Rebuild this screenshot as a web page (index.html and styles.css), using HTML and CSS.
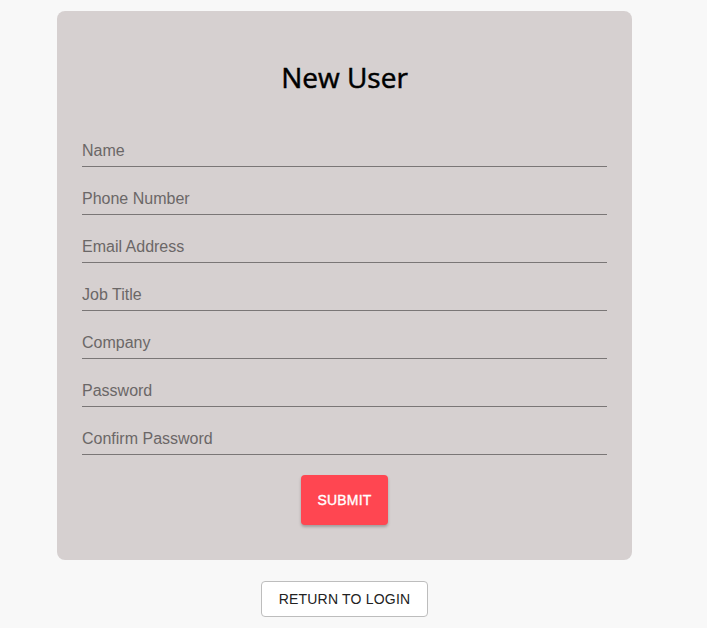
FILE: index.html
```html
<!DOCTYPE html>
<html>
<head>
<meta charset="utf-8">
<link rel="stylesheet" href="styles.css">
</head>
<body>
<div class="page">
  <div class="card">
    <h2 class="title">New User</h2>
    <form class="form">
      <input class="field" type="text" placeholder="Name">
      <input class="field" type="text" placeholder="Phone Number">
      <input class="field" type="text" placeholder="Email Address">
      <input class="field" type="text" placeholder="Job Title">
      <input class="field" type="text" placeholder="Company">
      <input class="field" type="password" placeholder="Password">
      <input class="field" type="password" placeholder="Confirm Password">
      <button class="submit" type="button">SUBMIT</button>
    </form>
  </div>
  <div class="actions">
    <button class="return" type="button">RETURN TO LOGIN</button>
  </div>
</div>
</body>
</html>
```

FILE: styles.css
```css
html, body {
  margin: 0;
  padding: 0;
  background: #f8f8f8;
}
.page {
  width: 575px;
  margin-left: 57px;
  padding-top: 11px;
}
.card {
  background: #d6d0d0;
  border-radius: 8px;
  padding: 49px 25px 35px;
}
.title {
  margin: 0 0 40px;
  text-align: center;
  font-family: "Open Sans", sans-serif;
  font-weight: 400;
  font-size: 28px;
  line-height: 34px;
  -webkit-text-stroke: 0.5px #000;
  color: #000;
}
.form {
  display: flex;
  flex-direction: column;
  gap: 15px;
  margin: 0;
}
.field {
  box-sizing: border-box;
  height: 33px;
  width: 100%;
  border: none;
  border-bottom: 1px solid #7a7676;
  background: transparent;
  padding: 2px 0 0;
  font-family: "Liberation Sans", Arial, sans-serif;
  font-size: 16px;
  color: #333;
  outline: none;
}
.field::placeholder {
  color: #6b6767;
}
.submit {
  align-self: center;
  margin-top: 5px;
  width: 87px;
  height: 50px;
  border: none;
  border-radius: 4px;
  background: #ff4651;
  color: #fff;
  font-family: "Liberation Sans", Arial, sans-serif;
  font-size: 14px;
  font-weight: 400;
  -webkit-text-stroke: 0.35px #fff;
  letter-spacing: 0.2px;
  box-shadow: 0 2px 3px rgba(0,0,0,0.25);
  cursor: pointer;
}
.actions {
  display: flex;
  justify-content: center;
  margin-top: 21px;
}
.return {
  box-sizing: border-box;
  width: 167px;
  height: 36px;
  background: #fff;
  border: 1px solid #bdbdbd;
  border-radius: 4px;
  font-family: "Liberation Sans", Arial, sans-serif;
  font-size: 14px;
  color: #222;
  letter-spacing: 0.2px;
}
```
